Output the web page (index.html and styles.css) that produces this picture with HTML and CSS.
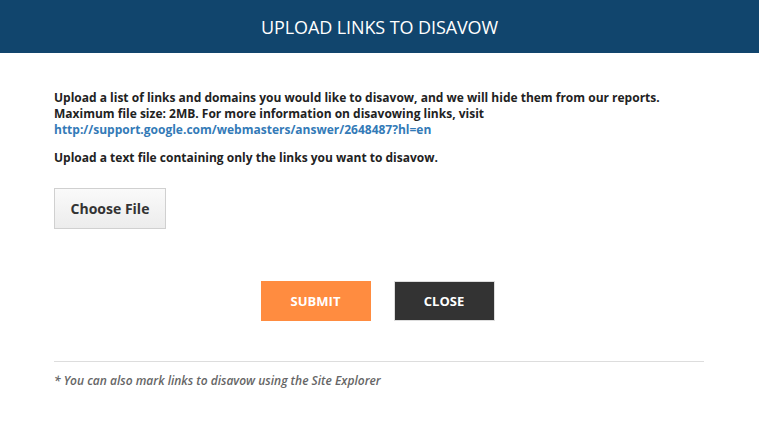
FILE: index.html
```html
<!DOCTYPE html>
<html>
<head>
<meta charset="utf-8">
<link rel="stylesheet" href="styles.css">
</head>
<body>
<div class="modal">
  <header class="modal-header">UPLOAD LINKS TO DISAVOW</header>
  <div class="modal-body">
    <p class="intro">Upload a list of links and domains you would like to disavow, and we will hide them from our reports. Maximum file size: 2MB. For more information on disavowing links, visit <a href="#" class="link">http://support.google.com/webmasters/answer/2648487?hl=en</a></p>
    <p class="intro">Upload a text file containing only the links you want to disavow.</p>
    <div class="file-row"><button class="choose">Choose File</button></div>
    <div class="actions">
      <button class="btn submit">SUBMIT</button>
      <button class="btn close">CLOSE</button>
    </div>
    <div class="note">* You can also mark links to disavow using the Site Explorer</div>
  </div>
</div>
</body>
</html>
```
FILE: styles.css
```css
html, body { margin: 0; padding: 0; background: #fff; }
body { font-family: "Open Sans", "DejaVu Sans", sans-serif; }
.modal { width: 759px; }
.modal-header {
  background: #11456d;
  color: #fff;
  height: 53px;
  display: flex;
  align-items: center;
  justify-content: center;
  font-size: 18px;
  letter-spacing: -0.1px;
}
.modal-body { padding: 37px 55px 0 54px; }
.intro {
  margin: 0 0 12px;
  font-size: 12px;
  font-weight: 700;
  line-height: 16px;
  color: #222;
}
.link { color: #337ab7; text-decoration: none; }
.file-row { margin-top: 22px; }
.choose {
  width: 112px;
  height: 41px;
  border: 1px solid #d0d0d0;
  background: linear-gradient(#fafafa, #ececec);
  font-family: inherit;
  font-size: 14px;
  font-weight: 700;
  color: #333;
  padding: 0;
}
.actions {
  display: flex;
  justify-content: center;
  gap: 23px;
  margin-top: 52px;
  padding-right: 3px;
}
.btn {
  height: 40px;
  border: none;
  font-family: inherit;
  font-size: 13px;
  font-weight: 700;
  color: #fff;
  padding: 0;
}
.submit { width: 110px; background: #ff8c40; }
.close { width: 101px; background: #333; border: 1px solid #ddd; }
.note {
  margin-top: 40px;
  border-top: 1px solid #ddd;
  padding-top: 10px;
  font-size: 12px;
  font-style: italic;
  font-weight: 600;
  color: #666;
}
```
